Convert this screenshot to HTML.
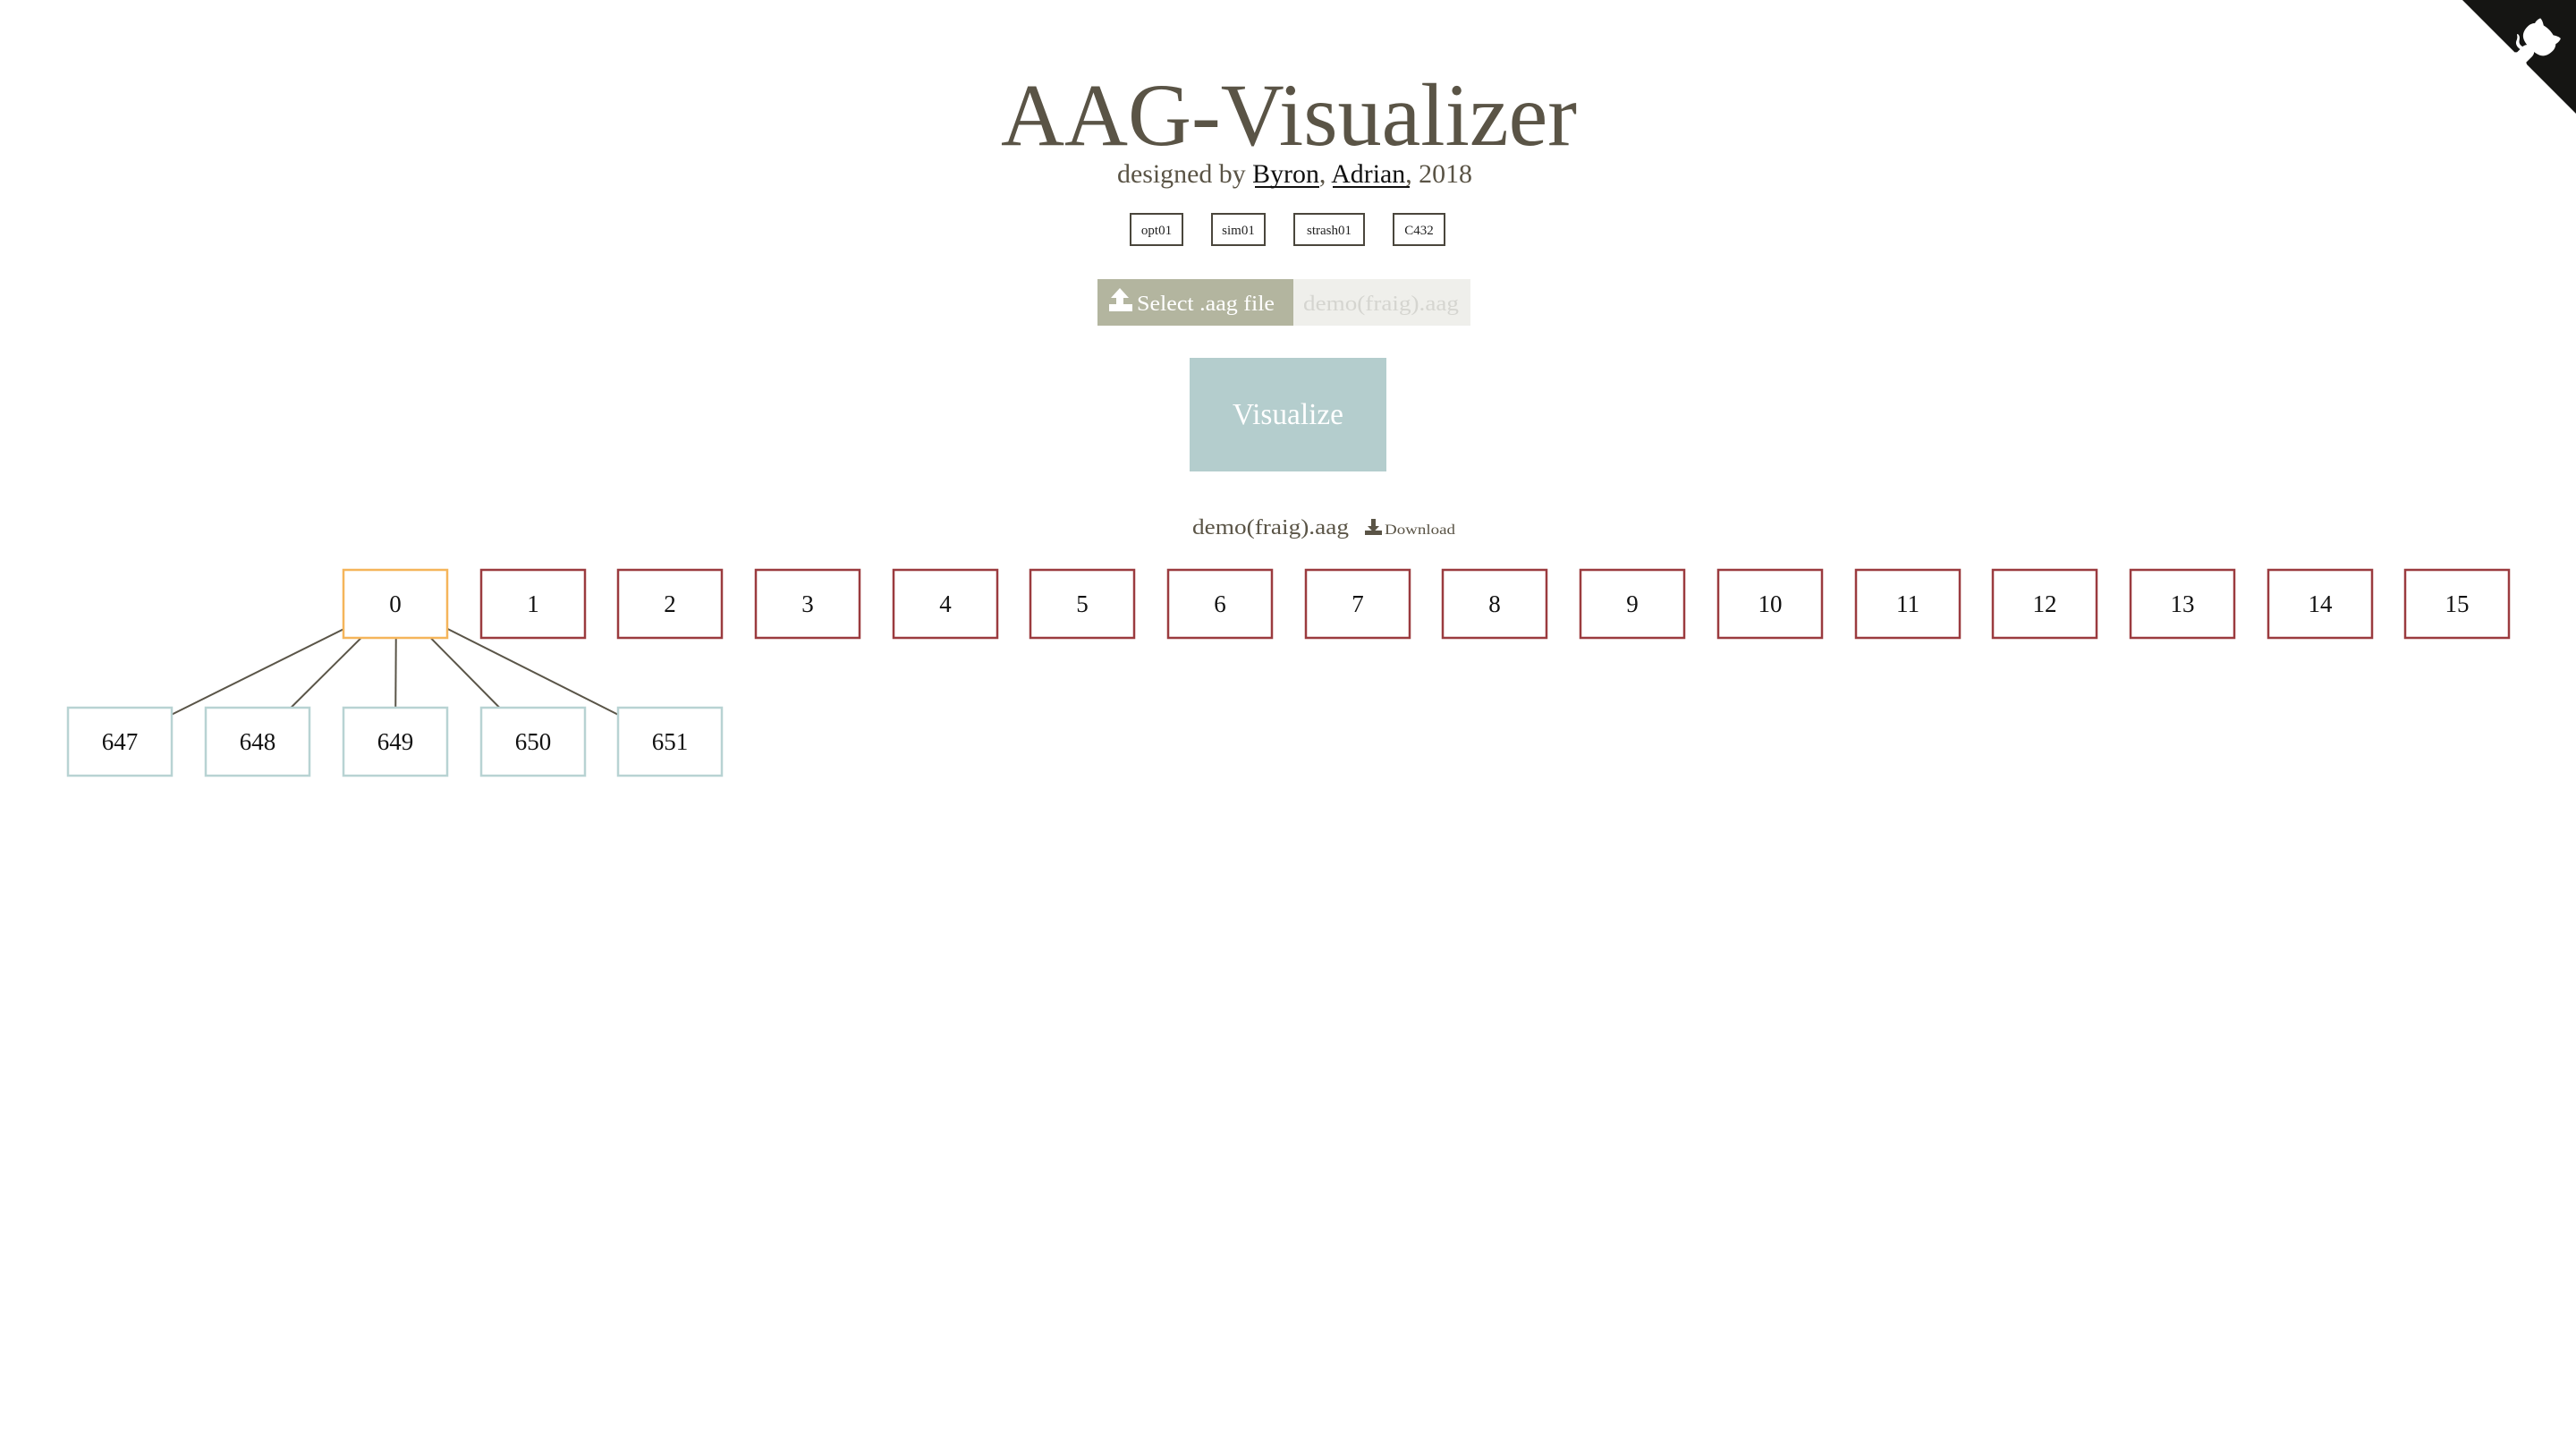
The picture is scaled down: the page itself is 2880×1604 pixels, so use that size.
<!DOCTYPE html>
<html><head><meta charset="utf-8"><style>html,body{margin:0;padding:0;background:#fff;overflow:hidden}svg{display:block}</style></head>
<body>
<svg width="2880" height="1604" viewBox="0 0 2880 1604" xmlns="http://www.w3.org/2000/svg" font-family="Liberation Serif, serif">
<rect width="2880" height="1604" fill="#fff"/>
<!-- github corner -->
<g transform="translate(2753,0) scale(0.508)">
<path d="M0,0 L115,115 L130,115 L142,142 L250,250 L250,0 Z" fill="#151513"/>
<path d="M128.3,109.0 C113.8,99.7 119.0,89.6 119.0,89.6 C122.0,82.7 120.5,78.6 120.5,78.6 C119.2,72.0 123.4,76.3 123.4,76.3 C127.3,80.9 125.5,87.3 125.5,87.3 C122.9,97.6 130.6,101.9 134.4,103.2" fill="#fff"/>
<path d="M115.0,115.0 C114.9,115.1 118.7,116.5 119.8,115.4 L133.7,101.6 C136.9,99.2 139.9,98.4 142.2,98.6 C133.8,88.0 127.5,74.4 143.8,58.0 C148.5,53.4 154.0,51.2 159.7,51.0 C160.3,49.4 163.2,43.6 171.4,40.1 C171.4,40.1 176.1,42.5 178.8,56.2 C183.1,58.6 187.2,61.8 190.9,65.4 C194.5,69.0 197.7,73.2 200.1,77.6 C213.8,80.2 216.3,84.9 216.3,84.9 C212.7,93.1 206.9,96.0 205.4,96.6 C205.1,102.4 203.0,107.8 198.3,112.5 C181.9,128.9 168.3,122.5 157.7,114.1 C157.9,116.9 156.7,120.9 152.7,124.9 L141.0,136.5 C139.8,137.7 141.6,141.9 141.8,141.8 Z" fill="#fff"/>
</g>
<!-- title -->
<text x="1119" y="162" font-size="100" fill="#5a5446" textLength="644" lengthAdjust="spacingAndGlyphs">AAG-Visualizer</text>
<text x="1249" y="204" font-size="30" fill="#5a5446" textLength="397" lengthAdjust="spacingAndGlyphs">designed by <tspan fill="#111">Byron</tspan>, <tspan fill="#111">Adrian</tspan>, 2018</text>
<line x1="1403" y1="209" x2="1475" y2="209" stroke="#111" stroke-width="2"/>
<line x1="1490" y1="209" x2="1576" y2="209" stroke="#111" stroke-width="2"/>
<!-- small buttons -->
<g fill="none" stroke="#4a463c" stroke-width="2">
<rect x="1264" y="239" width="58" height="35"/>
<rect x="1355" y="239" width="59" height="35"/>
<rect x="1447" y="239" width="78" height="35"/>
<rect x="1558" y="239" width="57" height="35"/>
</g>
<g font-size="15" fill="#222" text-anchor="middle">
<text x="1293" y="262">opt01</text>
<text x="1384.5" y="262">sim01</text>
<text x="1486" y="262">strash01</text>
<text x="1586.5" y="262">C432</text>
</g>
<!-- select file -->
<rect x="1227" y="312" width="219" height="52" fill="#b3b59f"/>
<rect x="1446" y="312" width="198" height="52" fill="#efefeb"/>
<g fill="#fff">
<path d="M1252 322 L1242 333 L1248 333 L1248 342 L1256 342 L1256 333 L1262 333 Z"/>
<rect x="1240" y="340" width="26" height="8"/>
</g>
<text x="1271" y="347" font-size="24" fill="#fff" textLength="154" lengthAdjust="spacingAndGlyphs">Select .aag file</text>
<text x="1457" y="347" font-size="24" fill="#d5d5d0" textLength="174" lengthAdjust="spacingAndGlyphs">demo(fraig).aag</text>
<!-- visualize -->
<rect x="1330" y="400" width="220" height="127" fill="#b4cdcd"/>
<text x="1378" y="474" font-size="34" fill="#fff" textLength="124" lengthAdjust="spacingAndGlyphs">Visualize</text>
<!-- demo -->
<text x="1333" y="597" font-size="24" fill="#5a5446" textLength="175" lengthAdjust="spacingAndGlyphs">demo(fraig).aag</text>
<g fill="#5a5446">
<path d="M1533 580 L1538 580 L1538 588 L1542 588 L1535.5 595 L1529 588 L1533 588 Z"/>
<rect x="1526" y="593" width="19" height="5"/>
</g>
<text x="1548" y="597" font-size="16" fill="#5a5446" textLength="79" lengthAdjust="spacingAndGlyphs">Download</text>
<!-- edges -->
<g stroke="#5a5548" stroke-width="2">
<line x1="443" y1="674" x2="133" y2="828"/>
<line x1="443" y1="674" x2="288" y2="828"/>
<line x1="443" y1="674" x2="442" y2="828"/>
<line x1="443" y1="674" x2="595" y2="828"/>
<line x1="443" y1="674" x2="749" y2="828"/>
</g>
<!-- nodes -->
<g stroke-width="2.5" fill="#fff">
<rect x="384" y="637" width="116" height="76" stroke="#f5b55a"/>
<g stroke="#9b3b3f">
<rect x="538" y="637" width="116" height="76"/>
<rect x="691" y="637" width="116" height="76"/>
<rect x="845" y="637" width="116" height="76"/>
<rect x="999" y="637" width="116" height="76"/>
<rect x="1152" y="637" width="116" height="76"/>
<rect x="1306" y="637" width="116" height="76"/>
<rect x="1460" y="637" width="116" height="76"/>
<rect x="1613" y="637" width="116" height="76"/>
<rect x="1767" y="637" width="116" height="76"/>
<rect x="1921" y="637" width="116" height="76"/>
<rect x="2075" y="637" width="116" height="76"/>
<rect x="2228" y="637" width="116" height="76"/>
<rect x="2382" y="637" width="116" height="76"/>
<rect x="2536" y="637" width="116" height="76"/>
<rect x="2689" y="637" width="116" height="76"/>
</g>
<g stroke="#b8d3d3">
<rect x="76" y="791" width="116" height="76"/>
<rect x="230" y="791" width="116" height="76"/>
<rect x="384" y="791" width="116" height="76"/>
<rect x="538" y="791" width="116" height="76"/>
<rect x="691" y="791" width="116" height="76"/>
</g>
</g>
<g font-size="27" fill="#111" text-anchor="middle">
<text x="442" y="684">0</text>
<text x="596" y="684">1</text>
<text x="749" y="684">2</text>
<text x="903" y="684">3</text>
<text x="1057" y="684">4</text>
<text x="1210" y="684">5</text>
<text x="1364" y="684">6</text>
<text x="1518" y="684">7</text>
<text x="1671" y="684">8</text>
<text x="1825" y="684">9</text>
<text x="1979" y="684">10</text>
<text x="2133" y="684">11</text>
<text x="2286" y="684">12</text>
<text x="2440" y="684">13</text>
<text x="2594" y="684">14</text>
<text x="2747" y="684">15</text>
<text x="134" y="838">647</text>
<text x="288" y="838">648</text>
<text x="442" y="838">649</text>
<text x="596" y="838">650</text>
<text x="749" y="838">651</text>
</g>
</svg>
</body></html>
